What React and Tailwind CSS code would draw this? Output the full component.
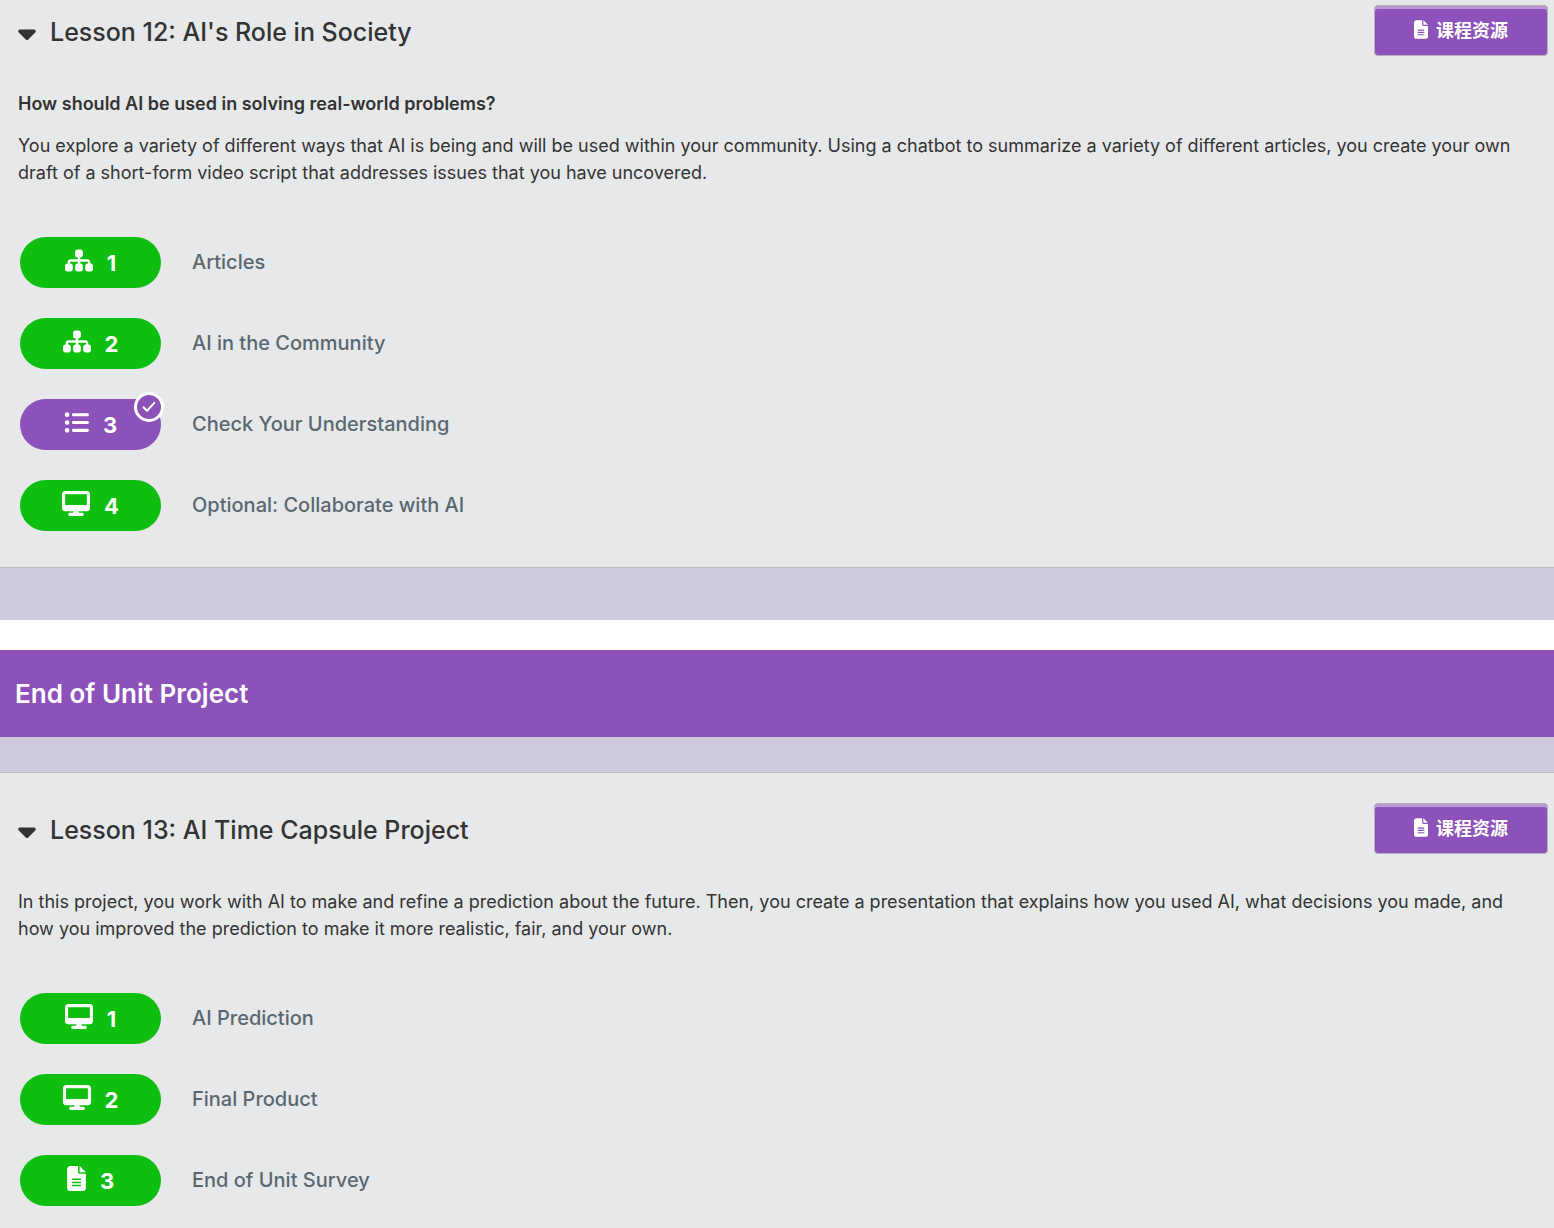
import {
  FaCaretDown,
  FaDesktop,
  FaFileLines,
  FaListUl,
  FaSitemap,
} from "react-icons/fa6";

const icons = {
  sitemap: <FaSitemap className="h-[25px] w-7" aria-hidden="true" />,
  list: <FaListUl className="size-[25px]" aria-hidden="true" />,
  desktop: <FaDesktop className="h-[25px] w-7" aria-hidden="true" />,
  page: <FaFileLines className="h-[25px] w-[19px]" aria-hidden="true" />,
};

const lesson12 = [
  { icon: "sitemap", title: "Articles" },
  { icon: "sitemap", title: "AI in the Community" },
  { icon: "list", title: "Check Your Understanding", assessment: true },
  { icon: "desktop", title: "Optional: Collaborate with AI" },
];

const lesson13 = [
  { icon: "desktop", title: "AI Prediction" },
  { icon: "desktop", title: "Final Product" },
  { icon: "page", title: "End of Unit Survey" },
];

function AssessmentBadge() {
  return (
    <span className="absolute -top-[7px] -right-[3px] flex size-[30px] items-center justify-center rounded-full border-3 border-white bg-[#8c52ba]">
      <svg viewBox="0 0 14 12" className="h-3 w-3.5" fill="none" aria-hidden="true">
        <path
          d="M1.5 6.3 5 9.8 12.3 1.8"
          stroke="white"
          strokeWidth="2"
          strokeLinecap="round"
          strokeLinejoin="round"
        />
      </svg>
    </span>
  );
}

function LevelRow({ level, number }) {
  return (
    <li>
      <a href="#level" className="flex items-center gap-[31px]">
        <span
          className={`relative flex h-[51px] w-[141px] shrink-0 items-center justify-center gap-3.5 rounded-full pb-0.5 text-white ${
            level.assessment ? "bg-[#8c52ba]" : "bg-[#0fbf0f]"
          }`}
        >
          <span className="pb-0.5">{icons[level.icon]}</span>
          <span className="pt-0.5 text-[22px] leading-6 font-bold">{number}</span>
          {level.assessment && <AssessmentBadge />}
        </span>
        <span className="pb-0.5 text-xl font-medium text-[#5b6770]">{level.title}</span>
      </a>
    </li>
  );
}

function Lesson({ title, question, description, levels, className }) {
  return (
    <section className={`border-b border-[#bbb] bg-[#e7e8ea] ${className}`}>
      <header className="flex items-center justify-between pr-1.5 pl-[18px]">
        <button type="button" className="flex items-center gap-3.5 pt-1">
          <FaCaretDown className="h-7 w-[18px]" aria-hidden="true" />
          <h2 className="pb-0.5 text-[25px] leading-9 font-medium">{title}</h2>
        </button>
        <button
          type="button"
          className="flex h-[51px] w-[174px] items-center justify-center gap-2 rounded border border-[#b5b1b9] bg-[#8c52ba] text-lg leading-6 font-bold text-white inset-shadow-[0_3px_0_#ba97d6]"
        >
          <FaFileLines className="h-[21px] w-3.5 pb-0.5" aria-hidden="true" />
          <span lang="zh">课程资源</span>
        </button>
      </header>
      <div className="pr-5 pl-[18px] pt-[34px] text-lg leading-[27px]">
        {question && <p className="mb-[15px] font-semibold">{question}</p>}
        <p>{description}</p>
      </div>
      <ol className="flex flex-col gap-[30px] pt-[51px] pb-9 pl-5">
        {levels.map((level, i) => (
          <LevelRow key={level.title} level={level} number={i + 1} />
        ))}
      </ol>
    </section>
  );
}

export default function App() {
  return (
    <main className="bg-white font-['Inter','Noto_Sans_CJK_SC',sans-serif] text-[#333]">
      <div className="bg-[#cec8dc] pb-[52px]">
        <Lesson
          className="pt-[5px]"
          title="Lesson 12: AI's Role in Society"
          question="How should AI be used in solving real-world problems?"
          description="You explore a variety of different ways that AI is being and will be used within your community. Using a chatbot to summarize a variety of different articles, you create your own draft of a short-form video script that addresses issues that you have uncovered."
          levels={lesson12}
        />
      </div>
      <div className="mt-[30px] bg-[#cec8dc]">
        <h1 className="bg-[#8c52ba] px-[15px] py-6 text-[26px] leading-[39px] font-semibold text-white">
          End of Unit Project
        </h1>
        <div className="pt-[35px]">
          <Lesson
            className="border-t pt-[30px]"
            title="Lesson 13: AI Time Capsule Project"
            description="In this project, you work with AI to make and refine a prediction about the future. Then, you create a presentation that explains how you used AI, what decisions you made, and how you improved the prediction to make it more realistic, fair, and your own."
            levels={lesson13}
          />
        </div>
      </div>
    </main>
  );
}
